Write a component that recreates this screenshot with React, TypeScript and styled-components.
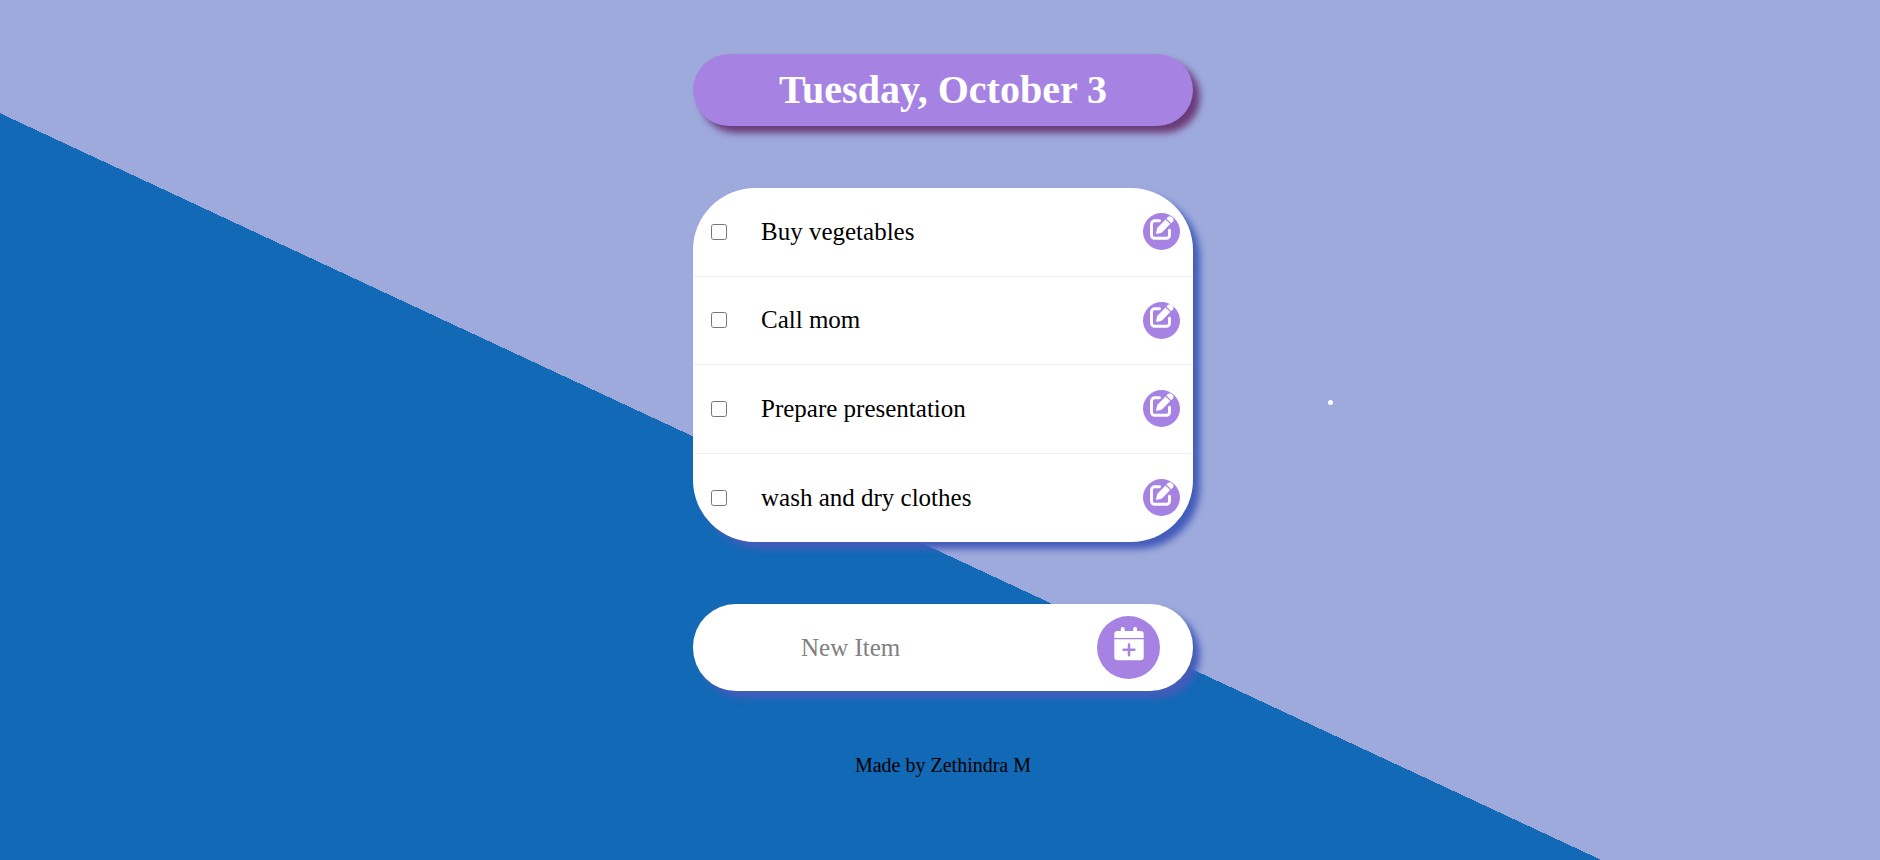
import React from "react";
import styled, { createGlobalStyle } from "styled-components";

const GlobalStyle = createGlobalStyle`
  * {
    box-sizing: border-box;
  }

  body {
    margin: 0;
    font-family: "Liberation Serif", "Times New Roman", serif;
    font-size: 20px;
    color: #000;
  }
`;

const Page = styled.div`
  position: relative;
  min-height: 100vh;
  padding: 54px 8px 32px 14px;
  display: flex;
  flex-direction: column;
  align-items: center;
  background: linear-gradient(25deg, #1269b6 43%, #9eaadc 43%);
`;

const Main = styled.main`
  width: 100%;
  max-width: 500px;
  display: flex;
  flex-direction: column;
  gap: 62px;
`;

const Panel = styled.section`
  background: #fff;
  box-shadow: 7px 7px 7px #445cba;
`;

const Heading = styled.h1`
  margin: 0;
  padding: 13px;
  border-radius: 36px;
  background: #a683e3;
  box-shadow: 7px 7px 7px #6b3a78;
  color: #fff;
  font-size: 40px;
  line-height: 46px;
  text-align: center;
`;

const ListPanel = styled(Panel)`
  border-radius: 62px;
`;

const List = styled.ul`
  min-height: 354px;
  margin: 0;
  padding: 0;
  display: grid;
  grid-auto-rows: 1fr;
  list-style: none;
`;

const Item = styled.li`
  padding: 0 13px 0 18px;
  display: flex;
  align-items: center;
  border-bottom: 1px solid #f1f1f1;

  &:last-child {
    border-bottom: 0;
  }
`;

const Check = styled.input`
  width: 16px;
  height: 16px;
  margin: 0 34px 0 0;
`;

const Label = styled.label`
  flex: 1;
  font-size: 25px;
  line-height: 30px;
`;

const RoundButton = styled.button<{ $size: number }>`
  width: ${({ $size }) => $size}px;
  height: ${({ $size }) => $size}px;
  flex: none;
  padding: 0 0 8px;
  display: flex;
  align-items: center;
  justify-content: center;
  border: 0;
  border-radius: 50%;
  background: #a683e3;
  color: #fff;
  cursor: pointer;

  svg {
    flex: none;
  }
`;

const NewItemForm = styled(Panel).attrs({ as: "form" })`
  height: 87px;
  padding: 0 33px 0 108px;
  display: flex;
  align-items: center;
  border-radius: 43px;
`;

const NewItemInput = styled.input`
  flex: 1;
  min-width: 0;
  height: 60px;
  padding: 0;
  border: 0;
  outline: 0;
  background: transparent;
  font-family: inherit;
  font-size: 25px;

  &::placeholder {
    color: #808080;
  }
`;

const Footer = styled.footer`
  margin-top: 62px;
  line-height: 24px;
`;

const Speck = styled.span`
  position: absolute;
  top: 400px;
  left: calc(50% + 388px);
  width: 5px;
  height: 5px;
  border-radius: 50%;
  background: #fff;
`;

function EditIcon() {
  return (
    <svg width="24" height="24" viewBox="0 0 24 24" fill="none" aria-hidden="true">
      <path
        d="M9.5 4.8H4.6A3.1 3.1 0 0 0 1.5 7.9v11.3a3.1 3.1 0 0 0 3.1 3.1h11.8a3.1 3.1 0 0 0 3.1-3.1v-4.9"
        stroke="currentColor"
        strokeWidth="2.9"
        strokeLinecap="round"
      />
      <path
        d="M15.5 3.4 20.2 8.1 12.4 15.9Q11.7 16.6 10.7 16.9L7 17.8Q5.9 18 6.1 16.9L7 13Q7.2 12 7.9 11.2Z"
        fill="currentColor"
      />
      <path
        d="M16.4 2.5 18.2.8Q19.8-.5 21.4.8L22.9 2.3Q24.2 3.9 22.9 5.4L21.1 7.2Z"
        fill="currentColor"
      />
    </svg>
  );
}

function CalendarPlusIcon() {
  return (
    <svg width="30" height="34" viewBox="0 0 30 34" aria-hidden="true">
      <rect x="6.8" width="3.9" height="8" rx="1.9" fill="currentColor" />
      <rect x="19.2" width="3.9" height="8" rx="1.9" fill="currentColor" />
      <path d="M.3 11V7.2A3.2 3.2 0 0 1 3.5 4h23a3.2 3.2 0 0 1 3.2 3.2V11Z" fill="currentColor" />
      <path
        d="M.3 12.2h29.4v17.9a3.2 3.2 0 0 1-3.2 3.2h-23a3.2 3.2 0 0 1-3.2-3.2Z"
        fill="currentColor"
      />
      <path
        d="M15 17.4v10.8M9.6 22.8h10.8"
        stroke="#a683e3"
        strokeWidth="2.5"
        strokeLinecap="round"
      />
    </svg>
  );
}

const items = ["Buy vegetables", "Call mom", "Prepare presentation", "wash and dry clothes"];

export default function App() {
  return (
    <>
      <GlobalStyle />
      <Page>
        <Main>
          <Heading>Tuesday, October 3</Heading>
          <ListPanel>
            <List>
              {items.map((item, index) => (
                <Item key={item}>
                  <Check type="checkbox" id={`item-${index}`} />
                  <Label htmlFor={`item-${index}`}>{item}</Label>
                  <RoundButton type="button" aria-label={`Edit ${item}`} $size={37}>
                    <EditIcon />
                  </RoundButton>
                </Item>
              ))}
            </List>
          </ListPanel>
          <NewItemForm>
            <NewItemInput type="text" placeholder="New Item" aria-label="New Item" autoComplete="off" />
            <RoundButton type="button" aria-label="Add item" $size={63}>
              <CalendarPlusIcon />
            </RoundButton>
          </NewItemForm>
        </Main>
        <Footer>Made by Zethindra M</Footer>
        <Speck />
      </Page>
    </>
  );
}
